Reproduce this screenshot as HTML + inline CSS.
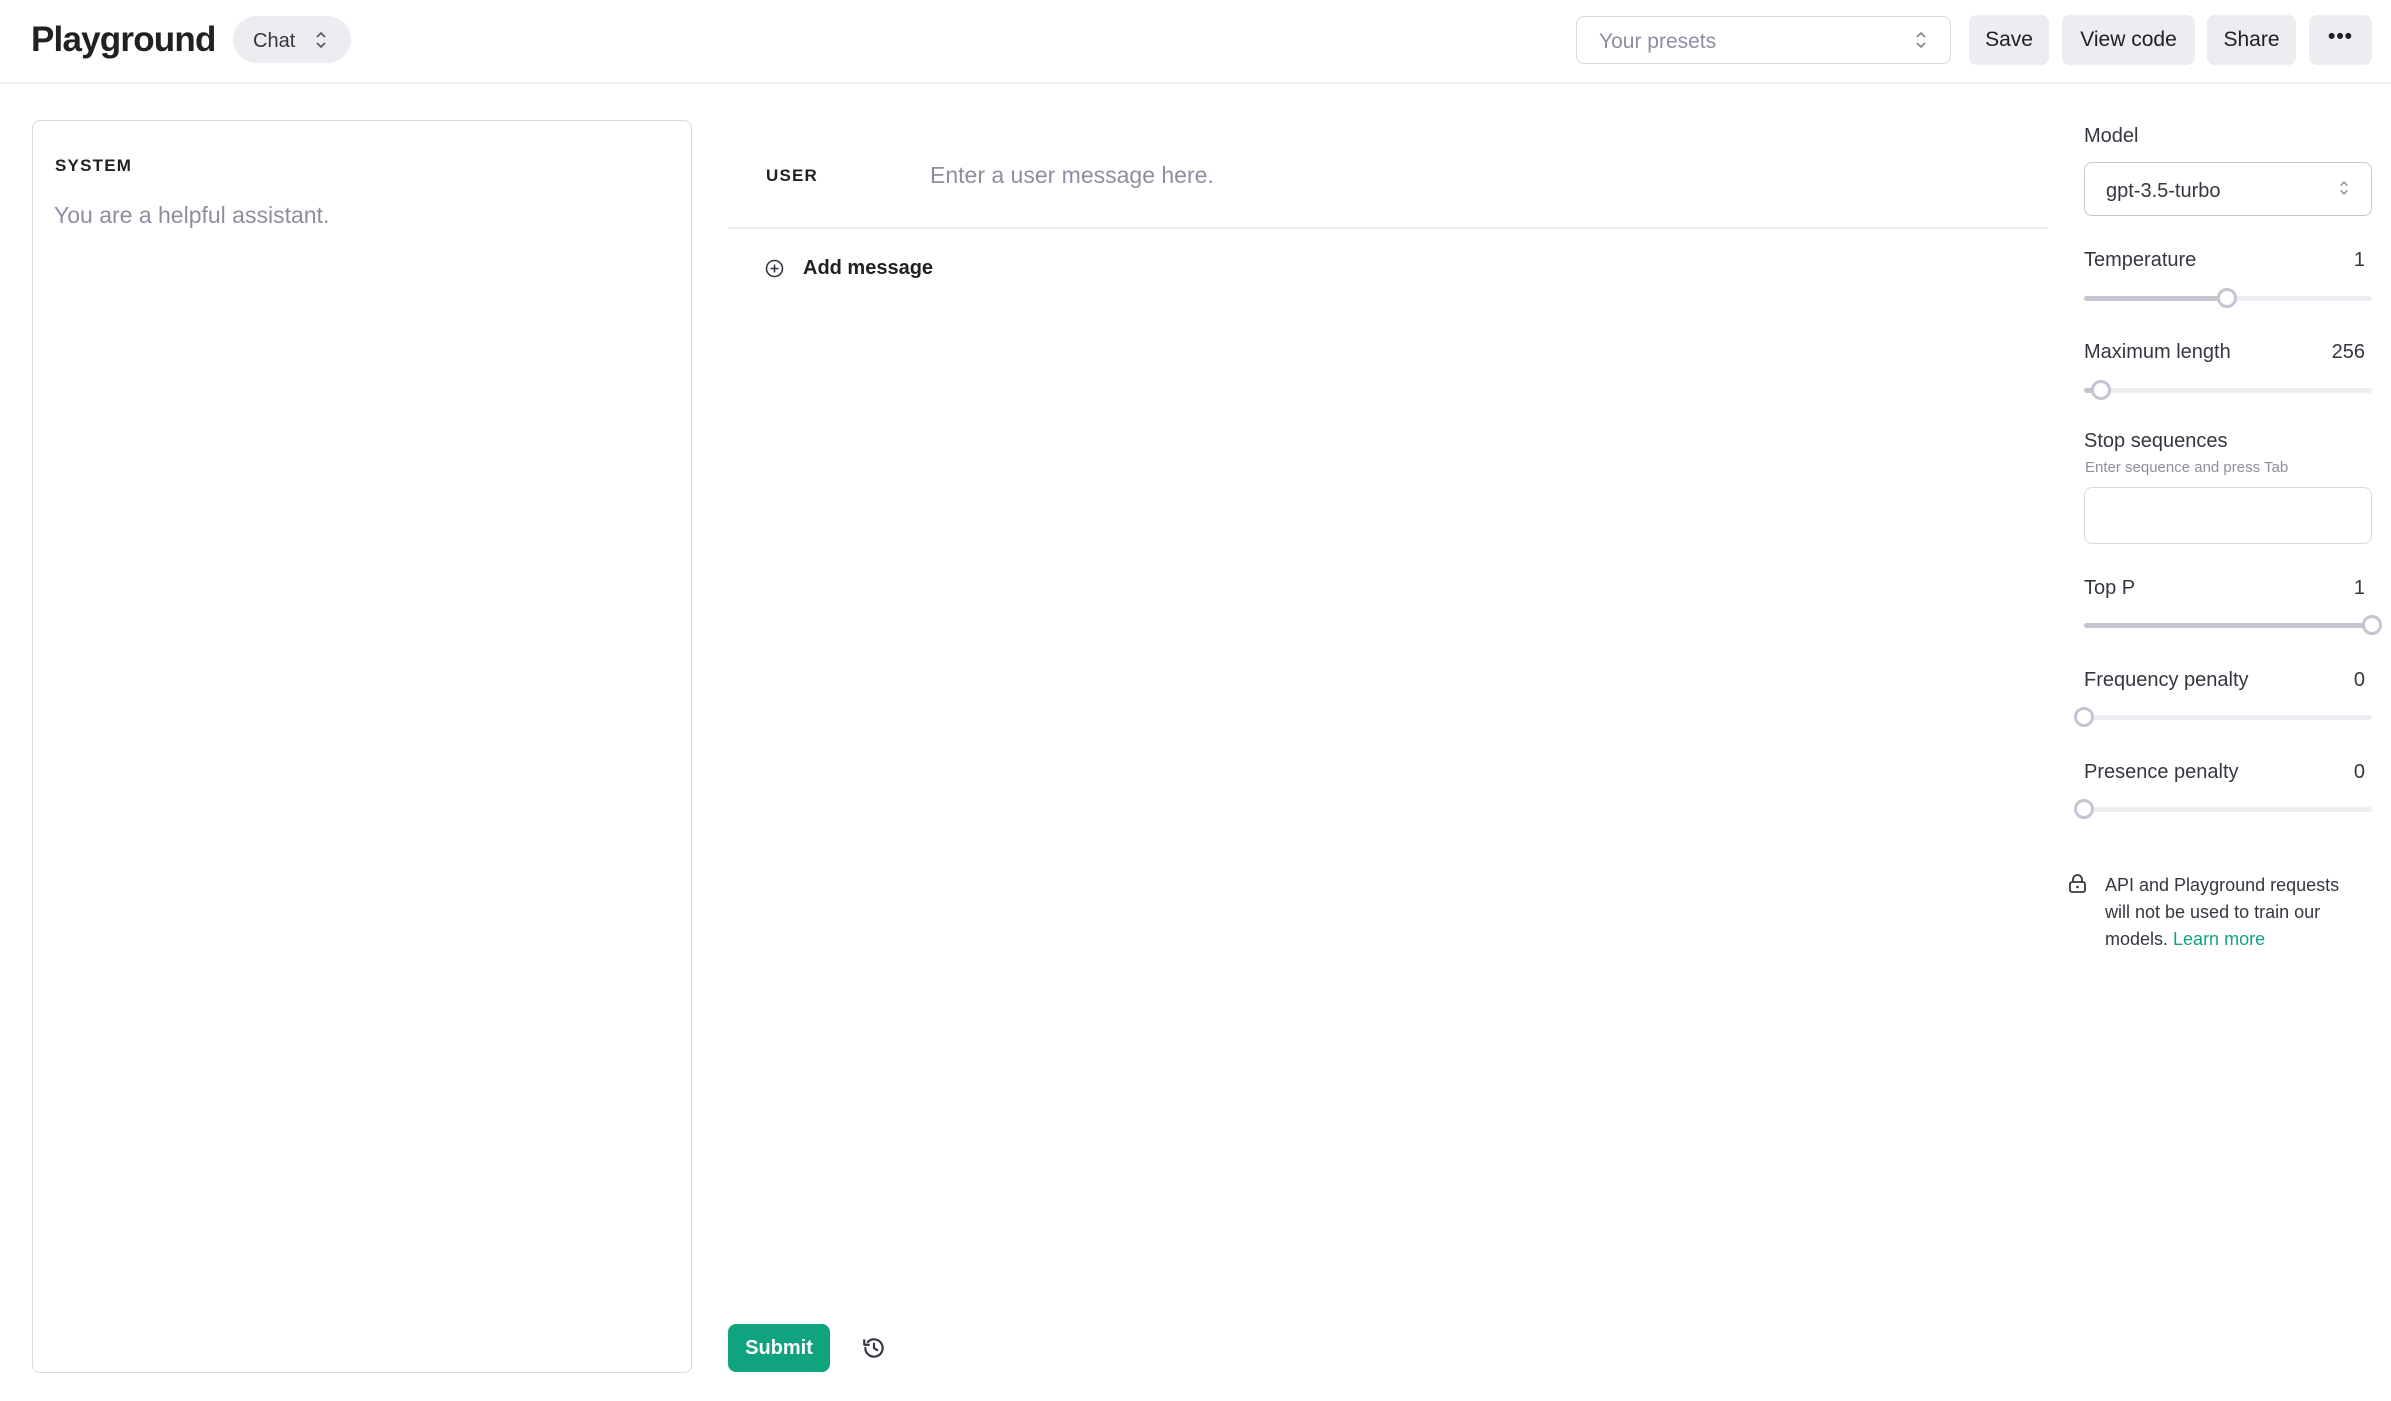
<!DOCTYPE html>
<html><head><meta charset="utf-8"><style>
*{box-sizing:border-box;margin:0;padding:0}
body{width:2391px;height:1401px;background:#fff;font-family:"Liberation Sans",sans-serif;color:#202123;position:relative;overflow:hidden}
.a{position:absolute}
.btn{position:absolute;top:15px;height:50px;background:#ececf1;border-radius:8px;font-size:21px;display:flex;align-items:center;justify-content:center;color:#202123}
.lbl{position:absolute;left:2084px;font-size:20px;color:#353740}
.val{position:absolute;right:26px;font-size:20px;color:#353740}
.track{position:absolute;left:2084px;width:288px;height:5px;border-radius:3px;background:#ececf1}
.fill{position:absolute;left:0;top:0;height:5px;background:#c5c5d2;border-radius:3px}
.thumb{position:absolute;width:20px;height:20px;border-radius:50%;background:#fff;border:3px solid #c5c5d2;top:-8px;margin-left:-10px}
</style></head><body>
<div class="a" style="left:0;top:82px;width:2391px;height:2px;background:#ececf1"></div>
<div class="a" style="left:31px;top:20px;font-size:35px;font-weight:bold;letter-spacing:-0.8px">Playground</div>
<div class="a" style="left:233px;top:16px;width:118px;height:47px;background:#ececf1;border-radius:24px;font-size:20px;padding:14px 0 0 20px;color:#353740">Chat
<svg class="a" style="left:82px;top:14px" width="12" height="20" viewBox="0 0 12 20"><path d="M2 7l4-4 4 4M2 13l4 4 4-4" fill="none" stroke="#555" stroke-width="1.6"/></svg></div>

<div class="a" style="left:1576px;top:16px;width:375px;height:48px;border:1.5px solid #d9d9e3;border-radius:8px;font-size:21px;color:#8e8ea0;padding:13px 0 0 22px">Your presets
<svg class="a" style="left:338px;top:13px" width="12" height="20" viewBox="0 0 12 20"><path d="M2 7l4-4 4 4M2 13l4 4 4-4" fill="none" stroke="#888" stroke-width="1.6"/></svg></div>
<div class="btn" style="left:1969px;width:80px">Save</div>
<div class="btn" style="left:2062px;width:133px">View code</div>
<div class="btn" style="left:2207px;width:89px">Share</div>
<div class="btn" style="left:2309px;width:63px;font-weight:bold;letter-spacing:1px;padding-bottom:6px">•••</div>

<div class="a" style="left:32px;top:120px;width:660px;height:1253px;border:1.5px solid #d9d9e3;border-radius:8px"></div>
<div class="a" style="left:55px;top:156px;font-size:17px;font-weight:bold;letter-spacing:1.2px">SYSTEM</div>
<div class="a" style="left:54px;top:202px;font-size:23px;color:#8e8ea0">You are a helpful assistant.</div>

<div class="a" style="left:766px;top:166px;font-size:17px;font-weight:bold;letter-spacing:1.2px">USER</div>
<div class="a" style="left:930px;top:162px;font-size:23px;color:#8e8ea0">Enter a user message here.</div>
<div class="a" style="left:728px;top:227px;width:1320px;height:2px;background:#ececf1"></div>
<svg class="a" style="left:765px;top:259px" width="19" height="19" viewBox="0 0 19 19"><circle cx="9.5" cy="9.5" r="8" fill="none" stroke="#353740" stroke-width="1.6"/><path d="M9.5 5.5v8M5.5 9.5h8" stroke="#353740" stroke-width="1.6"/></svg>
<div class="a" style="left:803px;top:257px;font-size:20px;font-weight:bold">Add message</div>

<div class="a" style="left:728px;top:1324px;width:102px;height:48px;background:#10a37f;border-radius:8px;color:#fff;font-size:20px;font-weight:bold;display:flex;align-items:center;justify-content:center">Submit</div>
<svg class="a" style="left:861px;top:1335px" width="26" height="26" viewBox="0 0 24 24"><path d="M4 12a8 8 0 1 0 2.3-5.6" fill="none" stroke="#353740" stroke-width="2" stroke-linecap="round"/><path d="M3 4v5h5" fill="none" stroke="#353740" stroke-width="2" stroke-linejoin="round"/><path d="M12 8v4l3 2" fill="none" stroke="#353740" stroke-width="2" stroke-linecap="round"/></svg>

<div class="lbl" style="top:125px">Model</div>
<div class="a" style="left:2084px;top:162px;width:288px;height:54px;border:1.5px solid #c5c5d2;border-radius:8px;font-size:20px;padding:17px 0 0 21px;color:#353740">gpt-3.5-turbo
<svg class="a" style="left:254px;top:16px" width="10" height="18" viewBox="0 0 12 20"><path d="M2 7l4-4 4 4M2 13l4 4 4-4" fill="none" stroke="#888" stroke-width="1.6"/></svg></div>

<div class="lbl" style="top:249px">Temperature</div><div class="val" style="top:249px">1</div>
<div class="track" style="top:296px"><div class="fill" style="width:143px"></div><div class="thumb" style="left:143px"></div></div>
<div class="lbl" style="top:341px">Maximum length</div><div class="val" style="top:341px">256</div>
<div class="track" style="top:388px"><div class="fill" style="width:17px"></div><div class="thumb" style="left:17px"></div></div>
<div class="lbl" style="top:430px">Stop sequences</div>
<div class="a" style="left:2085px;top:459px;font-size:15px;color:#8e8ea0">Enter sequence and press Tab</div>
<div class="a" style="left:2084px;top:487px;width:288px;height:57px;border:1.5px solid #d9d9e3;border-radius:8px"></div>
<div class="lbl" style="top:577px">Top P</div><div class="val" style="top:577px">1</div>
<div class="track" style="top:623px"><div class="fill" style="width:288px"></div><div class="thumb" style="left:288px"></div></div>
<div class="lbl" style="top:669px">Frequency penalty</div><div class="val" style="top:669px">0</div>
<div class="track" style="top:715px"><div class="thumb" style="left:0"></div></div>
<div class="lbl" style="top:761px">Presence penalty</div><div class="val" style="top:761px">0</div>
<div class="track" style="top:807px"><div class="thumb" style="left:0"></div></div>

<svg class="a" style="left:2068px;top:874px" width="19" height="20" viewBox="0 0 19 20"><rect x="2" y="8" width="15" height="10" rx="2" fill="none" stroke="#353740" stroke-width="1.8"/><path d="M5 8V5.5a4.5 4.5 0 0 1 9 0V8" fill="none" stroke="#353740" stroke-width="1.8"/><circle cx="9.5" cy="13" r="1.3" fill="#353740"/></svg>
<div class="a" style="left:2105px;top:872px;width:250px;font-size:18px;line-height:27px;color:#353740">API and Playground requests will not be used to train our models. <span style="color:#10a37f">Learn more</span></div>
</body></html>
